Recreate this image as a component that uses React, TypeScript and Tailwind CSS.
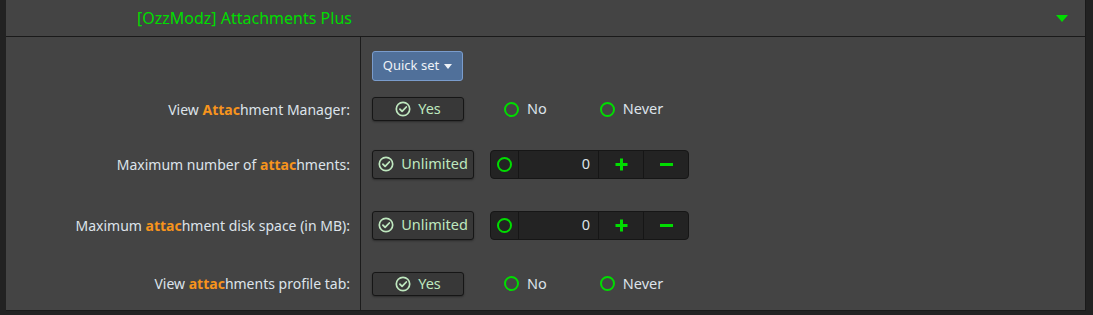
import React from 'react';

const font = { fontFamily: '"Segoe UI", "Noto Sans", "Liberation Sans", sans-serif' };

function CheckCircle() {
  return (
    <svg width="16" height="16" viewBox="0 0 16 16" fill="none">
      <circle cx="8" cy="8" r="6.7" stroke="currentColor" strokeWidth="1.7" />
      <path d="M4.9 8.2l2.2 2.2L11.3 6" stroke="currentColor" strokeWidth="1.8" strokeLinecap="round" strokeLinejoin="round" />
    </svg>
  );
}

function Ring() {
  return <span className="inline-block w-[15px] h-[15px] rounded-full border-2 border-[#00dd00]" />;
}

function Hl({ children }: { children: React.ReactNode }) {
  return <span className="font-bold text-[#f7941d]">{children}</span>;
}

function Toggle({ label, w, h }: { label: string; w: string; h: string }) {
  return (
    <div className={`${w} ${h} flex items-center justify-center gap-[7px] rounded-[3px] border border-[#161616] bg-[#383838] text-[#bfe8bf] text-[14.5px] shadow-[0_1px_2px_rgba(0,0,0,0.35)]`}>
      <CheckCircle />
      <span>{label}</span>
    </div>
  );
}

function Radio({ label }: { label: string }) {
  return (
    <div className="flex items-center gap-[8px] text-[#dde3ea] text-[14.5px]">
      <Ring />
      <span>{label}</span>
    </div>
  );
}

function NumberBox() {
  return (
    <div className="ml-[16px] flex h-[29px] w-[199px] rounded-[4px] border border-[#161616] bg-[#232323] text-[#00dd00]">
      <div className="w-[28px] flex items-center justify-center border-r border-[#161616]">
        <Ring />
      </div>
      <div className="w-[80px] flex items-center justify-end pr-[8px] border-r border-[#161616] text-[#dde3ea] text-[14.5px]">0</div>
      <div className="w-[45px] flex items-center justify-center border-r border-[#161616]">
        <svg width="13" height="13" viewBox="0 0 13 13">
          <path d="M6.5 0.5v12M0.5 6.5h12" stroke="#00dd00" strokeWidth="3" />
        </svg>
      </div>
      <div className="flex-1 flex items-center justify-center">
        <span className="block w-[13px] h-[3px] bg-[#00dd00]" />
      </div>
    </div>
  );
}

function Row({ h, pt, label, children }: { h: string; pt?: string; label: React.ReactNode; children: React.ReactNode }) {
  return (
    <div className={`grid grid-cols-[355px_1fr] ${h}`}>
      <div className={`flex items-center justify-end pr-[10px] border-r border-[#1c1c1c] text-[14px] text-[#dde3ea] ${pt ?? ''}`}>
        {label}
      </div>
      <div className={`flex items-center pl-[11px] ${pt ?? ''}`}>{children}</div>
    </div>
  );
}

export default function App() {
  return (
    <div className="w-[1093px] h-[315px] bg-[#222222] overflow-hidden" style={font}>
      <div className="ml-[6px] w-[1080px] h-[311px] bg-[#444444] border-r border-b border-[#1a1a1a] flex flex-col">
        <div className="h-[37px] flex items-center border-b border-[#1a1a1a] pl-[131px] pr-[17px]">
          <span className="text-[#00dd00] text-[16px] pb-[1px]">[OzzModz] Attachments Plus</span>
          <span className="ml-auto w-0 h-0 border-l-[6px] border-r-[6px] border-t-[7px] border-l-transparent border-r-transparent border-t-[#00dd00]" />
        </div>

        <Row h="h-[52px]" pt="pt-[14px] items-start" label="">
          <div className="h-[30px] w-[91px] flex items-center justify-center gap-[5px] rounded-[3px] border border-[#7a9ccc] bg-[#50709a] text-[#eef2f7] text-[13px]">
            <span>Quick set</span>
            <span className="w-0 h-0 border-l-[4px] border-r-[4px] border-t-[5px] border-l-transparent border-r-transparent border-t-[#eef2f7]" />
          </div>
        </Row>

        <Row h="h-[40px]" label={<span>View <Hl>Attac</Hl>hment Manager:</span>}>
          <Toggle label="Yes" w="w-[92px]" h="h-[24px]" />
          <div className="ml-[40px]"><Radio label="No" /></div>
          <div className="ml-[53px]"><Radio label="Never" /></div>
        </Row>

        <Row h="h-[70px]" label={<span>Maximum number of <Hl>attac</Hl>hments:</span>}>
          <Toggle label="Unlimited" w="w-[102px]" h="h-[29px]" />
          <NumberBox />
        </Row>

        <Row h="h-[52px]" label={<span>Maximum <Hl>attac</Hl>hment disk space (in MB):</span>}>
          <Toggle label="Unlimited" w="w-[102px]" h="h-[29px]" />
          <NumberBox />
        </Row>

        <Row h="flex-1" pt="pt-[6px]" label={<span>View <Hl>attac</Hl>hments profile tab:</span>}>
          <Toggle label="Yes" w="w-[92px]" h="h-[24px]" />
          <div className="ml-[40px]"><Radio label="No" /></div>
          <div className="ml-[53px]"><Radio label="Never" /></div>
        </Row>
      </div>
    </div>
  );
}
